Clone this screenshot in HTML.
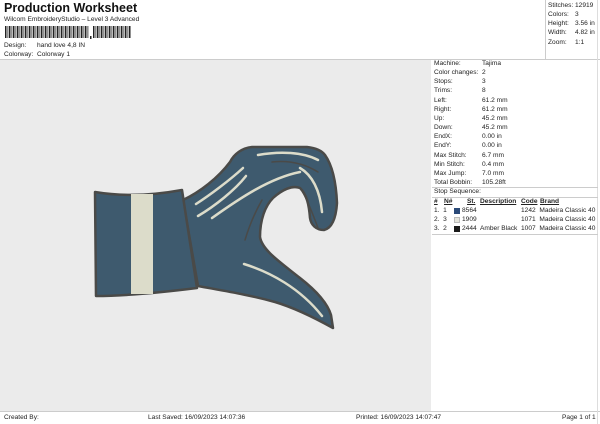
<!DOCTYPE html>
<html><head><meta charset="utf-8"><style>
*{margin:0;padding:0;box-sizing:border-box}
body{width:600px;height:424px;background:#fff;font-family:"Liberation Sans",sans-serif;color:#222;position:relative;overflow:hidden;font-size:6.6px}
.a{position:absolute;white-space:nowrap}
.t td{padding:0;height:9.15px;line-height:9.15px;font-size:6.6px;white-space:nowrap}
</style></head><body>
<div class="a" style="left:4px;top:1px;font-size:12.5px;font-weight:bold;color:#111">Production Worksheet</div>
<div class="a" style="left:4px;top:16px;font-size:6.6px">Wilcom EmbroideryStudio – Level 3 Advanced</div>
<svg class="a" style="left:5px;top:26px" width="126" height="14">
<rect x="0" y="0" width="84" height="12" fill="url(#bc)"/>
<rect x="88" y="0" width="42" height="12" fill="url(#bc)"/>
<rect x="85" y="10" width="1.5" height="3" fill="#222"/>
<defs><pattern id="bc" width="4" height="12" patternUnits="userSpaceOnUse"><rect width="1.5" height="12" fill="#222"/><rect x="2.5" width="0.8" height="12" fill="#222"/></pattern></defs>
</svg>
<div class="a" style="left:4px;top:42px">Design:</div><div class="a" style="left:37px;top:42px">hand love 4,8 IN</div>
<div class="a" style="left:4px;top:51px">Colorway:</div><div class="a" style="left:37px;top:51px">Colorway 1</div>
<div class="a" style="left:545px;top:0;width:1px;height:59px;background:#ccc"></div>
<div class="a" style="left:0;top:59px;width:600px;height:1px;background:#ccc"></div>
<div class="a" style="left:0;top:60px;width:431px;height:351px;background:#ebebeb"></div>
<div class="a" style="left:0;top:411px;width:600px;height:1px;background:#ccc"></div>
<div class="a" style="left:597px;top:0;width:1px;height:424px;background:#ddd"></div>
<table class="t a" style="left:548px;top:1px;border-collapse:collapse">
<tr><td style="width:27px">Stitches:</td><td>12919</td></tr>
<tr><td>Colors:</td><td>3</td></tr>
<tr><td>Height:</td><td>3.56 in</td></tr>
<tr><td>Width:</td><td>4.82 in</td></tr>
<tr><td>Zoom:</td><td>1:1</td></tr>
</table>
<table class="t a" style="left:434px;top:59px;border-collapse:collapse">
<tr><td style="width:48px">Machine:</td><td>Tajima</td></tr>
<tr><td>Color changes:</td><td>2</td></tr>
<tr><td>Stops:</td><td>3</td></tr>
<tr><td>Trims:</td><td>8</td></tr>
<tr><td>Left:</td><td>61.2 mm</td></tr>
<tr><td>Right:</td><td>61.2 mm</td></tr>
<tr><td>Up:</td><td>45.2 mm</td></tr>
<tr><td>Down:</td><td>45.2 mm</td></tr>
<tr><td>EndX:</td><td>0.00 in</td></tr>
<tr><td>EndY:</td><td>0.00 in</td></tr>
<tr><td>Max Stitch:</td><td>6.7 mm</td></tr>
<tr><td>Min Stitch:</td><td>0.4 mm</td></tr>
<tr><td>Max Jump:</td><td>7.0 mm</td></tr>
<tr><td>Total Bobbin:</td><td>105.28ft</td></tr>
</table>
<div class="a" style="left:432px;top:187px;width:166px;height:1px;background:#ccc"></div>
<div class="a" style="left:434px;top:188px">Stop Sequence:</div>
<div class="a" style="left:432px;top:197px;width:166px;height:1px;background:#ccc"></div>
<div class="a" style="left:434px;top:198px;font-weight:bold;text-decoration:underline">#</div>
<div class="a" style="left:444px;top:198px;font-weight:bold;text-decoration:underline">N#</div>
<div class="a" style="left:467px;top:198px;font-weight:bold;text-decoration:underline">St.</div>
<div class="a" style="left:480px;top:198px;font-weight:bold;text-decoration:underline">Description</div>
<div class="a" style="left:521px;top:198px;font-weight:bold;text-decoration:underline">Code</div>
<div class="a" style="left:540px;top:198px;font-weight:bold;text-decoration:underline">Brand</div>
<div class="a" style="left:434px;top:207px">1.&nbsp; 1</div><div class="a" style="left:454px;top:208px;width:6px;height:6px;background:#2b4a78"></div><div class="a" style="left:462px;top:207px">8564</div><div class="a" style="left:521px;top:207px">1242&nbsp; Madeira Classic 40</div>
<div class="a" style="left:434px;top:216px">2.&nbsp; 3</div><div class="a" style="left:454px;top:217px;width:6px;height:6px;background:#e5e5dc;border:0.5px solid #bbb"></div><div class="a" style="left:462px;top:216px">1909</div><div class="a" style="left:521px;top:216px">1071&nbsp; Madeira Classic 40</div>
<div class="a" style="left:434px;top:225px">3.&nbsp; 2</div><div class="a" style="left:454px;top:226px;width:6px;height:6px;background:#1a1a1a"></div><div class="a" style="left:462px;top:225px">2444&nbsp; Amber Black</div><div class="a" style="left:521px;top:225px">1007&nbsp; Madeira Classic 40</div>
<div class="a" style="left:432px;top:234px;width:166px;height:1px;background:#ccc"></div>

<svg class="a" style="left:0;top:0" width="431" height="411">
<g stroke="#4a4a48" stroke-width="2.5" stroke-linejoin="round" fill="#3e5a6e">
<path d="M183,200 C200,192 218,178 230,162 C234,154 242,148 252,147 L307,147 C316,148 322,151 325,155 C332,165 336,180 337,203 C336,218 332,228 324,230 C316,230 311,225 310,218 C309,205 307,195 300,188 C292,185 282,190 273,198 C265,206 260,220 260,237 C262,250 280,262 300,278 C318,292 328,305 331,315 L333,328 C315,318 295,308 275,302 C250,295 225,291 198,286 Z"/>
<path d="M95,192 C125,197 155,195 182,190 L197,288 C165,292 125,296 96,296 Z"/>
</g>
<rect x="131" y="194" width="22" height="100" fill="#dcdcca"/>
<g stroke="#4a4a48" stroke-width="1.5" fill="none" stroke-linecap="round">
<path d="M272,162 C290,160 305,164 318,172"/>
<path d="M300,188 C306,196 312,212 318,228"/>
<path d="M262,200 C254,214 248,230 245,240"/>
</g>
<g stroke="#dcdcca" stroke-width="2.5" fill="none" stroke-linecap="round">
<path d="M196,204 C210,195 230,180 243,168"/>
<path d="M198,216 C215,206 235,190 246,176"/>
<path d="M212,218 C240,198 270,178 300,172"/>
<path d="M258,155 C280,151 303,152 318,160"/>
<path d="M300,168 C312,175 320,190 322,212"/>
<path d="M244,264 C270,272 300,288 322,316"/>
</g>
</svg>

<div class="a" style="left:4px;top:414px">Created By:</div>
<div class="a" style="left:148px;top:414px">Last Saved: 16/09/2023 14:07:36</div>
<div class="a" style="left:356px;top:414px">Printed: 16/09/2023 14:07:47</div>
<div class="a" style="left:562px;top:414px">Page 1 of 1</div>
</body></html>
